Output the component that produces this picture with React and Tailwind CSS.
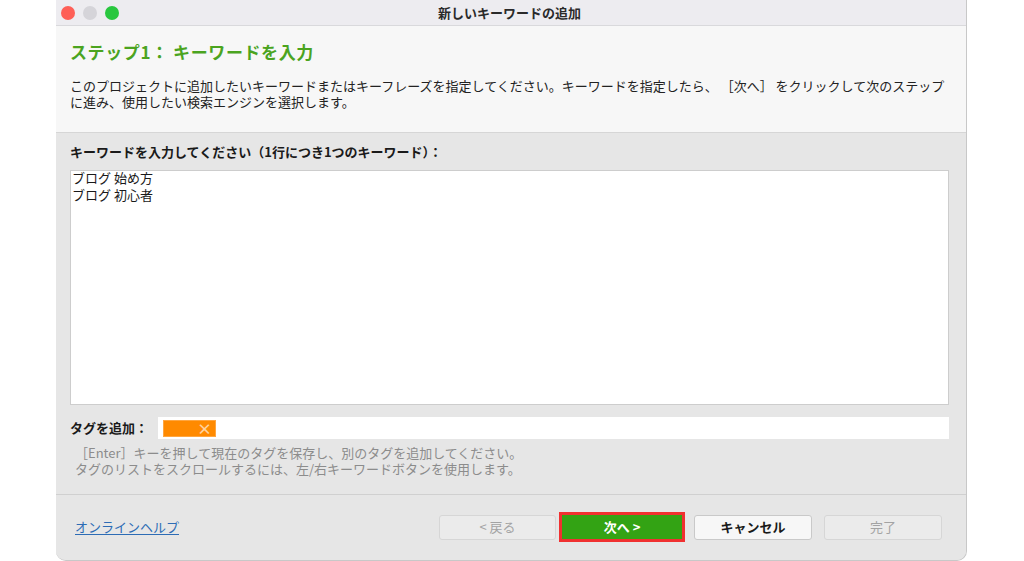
export default function App() {
  const font = { fontFamily: '"Noto Sans CJK JP", "Noto Sans", sans-serif' };
  return (
    <div className="w-[1024px] h-[561px] bg-white overflow-hidden flex" style={font}>
      <div className="ml-[56px] w-[911px] h-[561px] flex flex-col rounded-b-[10px] overflow-hidden border-r border-b border-[#c8c8c8] bg-[#e6e6e6]">
        {/* Title bar */}
        <div className="h-[26px] shrink-0 bg-[#edecf0] border-b border-[#d9d9dc] flex items-center relative">
          <div className="flex items-center gap-[8px] pl-[5px]">
            <span className="w-[14px] h-[14px] rounded-full bg-[#fe5f57]" />
            <span className="w-[14px] h-[14px] rounded-full bg-[#d5d4d9]" />
            <span className="w-[14px] h-[14px] rounded-full bg-[#29c73f]" />
          </div>
          <div className="absolute inset-0 flex items-center justify-center text-[13px] font-semibold text-[#2a2a2a] pr-[3px]">
            新しいキーワードの追加
          </div>
        </div>
        {/* Header */}
        <div className="h-[107px] shrink-0 bg-[#f7f7f7] border-b border-[#d6d6d6] pl-[14px] pr-[16px] pt-[14px]">
          <div className="text-[17px] leading-[24px] font-bold text-[#4ba41f] tracking-[0.6px]">ステップ1： キーワードを入力</div>
          <div className="mt-[14px] text-[13px] leading-[16px] text-[#222] whitespace-nowrap">
            <div>このプロジェクトに追加したいキーワードまたはキーフレーズを指定してください。キーワードを指定したら、 ［次へ］ をクリックして次のステップ</div>
            <div>に進み、使用したい検索エンジンを選択します。</div>
          </div>
        </div>
        {/* Body */}
        <div className="flex-1 flex flex-col bg-[#e6e6e6]">
          <div className="pl-[14px] pr-[17px] pt-[11px]">
            <div className="text-[13px] leading-[16px] font-bold text-[#1a1a1a]">キーワードを入力してください（1行につき1つのキーワード）：</div>
            <div className="mt-[10px] h-[235px] bg-white border border-[#cdcdcd] px-[1px] text-[13px] leading-[17px] text-[#1a1a1a]">
              <div className="-translate-y-[2px]">
                <div>ブログ 始め方</div>
                <div>ブログ 初心者</div>
              </div>
            </div>
            <div className="mt-[12px] flex items-center h-[22px]">
              <div className="w-[88px] text-[13px] font-bold text-[#1a1a1a]">タグを追加：</div>
              <div className="flex-1 h-[22px] bg-white flex items-center pl-[5px]">
                <div className="w-[53px] h-[17px] bg-[#ff8a00] border border-[#ffa640] flex items-center justify-end pr-[3px]">
                  <span className="text-[#ffd3a0] text-[15px] leading-none font-bold">×</span>
                </div>
              </div>
            </div>
            <div className="mt-[6px] pl-[5px] text-[13px] leading-[16px] text-[#8c8c8c]">
              <div>［Enter］キーを押して現在のタグを保存し、別のタグを追加してください。</div>
              <div>タグのリストをスクロールするには、左/右キーワードボタンを使用します。</div>
            </div>
          </div>
          <div className="mt-[17px] border-t border-[#d0d0d0]" />
          <div className="flex items-center pl-[19px] pr-[24px] pt-[17px]">
            <a className="text-[13px] text-[#2d6cb5] underline underline-offset-2 flex-1">オンラインヘルプ</a>
            <div className="flex items-center">
              <div className="w-[117px] h-[25px] rounded-[3px] bg-[#ebebeb] border border-[#d6d6d6] flex items-center justify-center text-[13px] text-[#a3a3a3]">&lt;&nbsp;戻る</div>
              <div className="ml-[3px] w-[126px] h-[30px] border-[3px] border-[#f03030] flex items-center justify-center">
                <div className="w-[120px] h-[24px] bg-[#33a314] flex items-center justify-center text-[13px] font-bold text-white">次へ&nbsp;&gt;</div>
              </div>
              <div className="ml-[9px] w-[118px] h-[25px] rounded-[3px] bg-[#f7f7f7] border border-[#c9c9c9] flex items-center justify-center text-[13px] font-bold text-[#1a1a1a]">キャンセル</div>
              <div className="ml-[12px] w-[118px] h-[25px] rounded-[3px] bg-[#ebebeb] border border-[#d6d6d6] flex items-center justify-center text-[13px] text-[#a3a3a3]">完了</div>
            </div>
          </div>
        </div>
      </div>
    </div>
  );
}
